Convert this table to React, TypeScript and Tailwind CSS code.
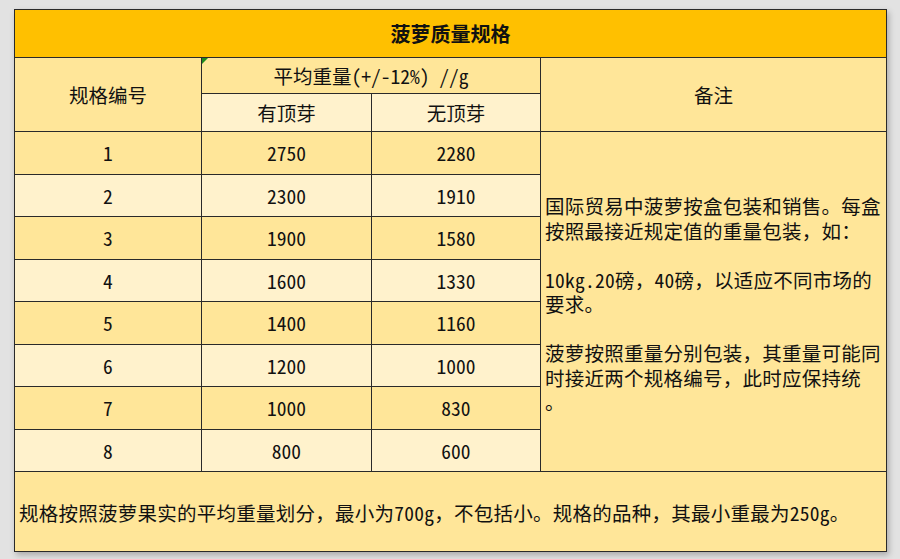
import React from "react";

const rows = [
  { id: "1", withTop: "2750", noTop: "2280" },
  { id: "2", withTop: "2300", noTop: "1910" },
  { id: "3", withTop: "1900", noTop: "1580" },
  { id: "4", withTop: "1600", noTop: "1330" },
  { id: "5", withTop: "1400", noTop: "1160" },
  { id: "6", withTop: "1200", noTop: "1000" },
  { id: "7", withTop: "1000", noTop: "830" },
  { id: "8", withTop: "800", noTop: "600" },
];

const remark =
  "国际贸易中菠萝按盒包装和销售。每盒\n按照最接近规定值的重量包装，如：\n\n10kg.20磅，40磅，以适应不同市场的\n要求。\n\n菠萝按照重量分别包装，其重量可能同\n时接近两个规格编号，此时应保持统\n。";

const font = { fontFamily: '"Noto Sans Mono CJK SC", "Noto Sans CJK SC", "DejaVu Sans", sans-serif' };

export default function App() {
  return (
    <div className="w-[900px] h-[559px] bg-[#e2e2e2] pl-[14px] pt-[9px] text-[#111]" style={font}>
      <div className="relative w-[873px] grid grid-cols-[186px_169px_168px_345px] grid-rows-[47px_35px_37px_42px_41px_42px_41px_42px_41px_42px_41px_79px] gap-px bg-[#2a2a2a] border border-[#2a2a2a] shadow-[2px_3px_6px_rgba(0,0,0,0.25)] text-[19.5px]">
        <div className="col-span-4 bg-[#ffc000] flex items-center justify-center font-bold text-[20px]">
          菠萝质量规格
        </div>

        <div className="row-span-2 bg-[#ffe699] flex items-center justify-center">规格编号</div>
        <div className="relative col-span-2 bg-[#ffe699] flex items-center justify-center">
          平均重量(+/-12%) //g
          <span className="absolute left-0 top-0 w-0 h-0 border-t-[6px] border-t-[#1e8a1e] border-r-[6px] border-r-transparent" />
        </div>
        <div className="row-span-2 bg-[#ffe699] flex items-center justify-center">备注</div>
        <div className="bg-[#fff2cc] flex items-center justify-center">有顶芽</div>
        <div className="bg-[#fff2cc] flex items-center justify-center">无顶芽</div>

        {rows.map((r, i) => {
          const bg = i % 2 === 0 ? "bg-[#ffe699]" : "bg-[#fff2cc]";
          return (
            <React.Fragment key={r.id}>
              <div className={`${bg} flex items-center justify-center`}>{r.id}</div>
              <div className={`${bg} flex items-center justify-center`}>{r.withTop}</div>
              <div className={`${bg} flex items-center justify-center`}>{r.noTop}</div>
              {i === 0 && (
                <div className="row-span-8 row-start-4 col-start-4 bg-[#ffe699] flex items-center pl-[4px] pt-[6px] whitespace-pre-line leading-[24.5px] tracking-[0.25px]">
                  {remark}
                </div>
              )}
            </React.Fragment>
          );
        })}

        <div className="col-span-4 bg-[#ffe699] flex items-center pl-[4px] pt-[3px] tracking-[0.25px]">
          规格按照菠萝果实的平均重量划分，最小为700g，不包括小。规格的品种，其最小重最为250g。
        </div>
      </div>
    </div>
  );
}
